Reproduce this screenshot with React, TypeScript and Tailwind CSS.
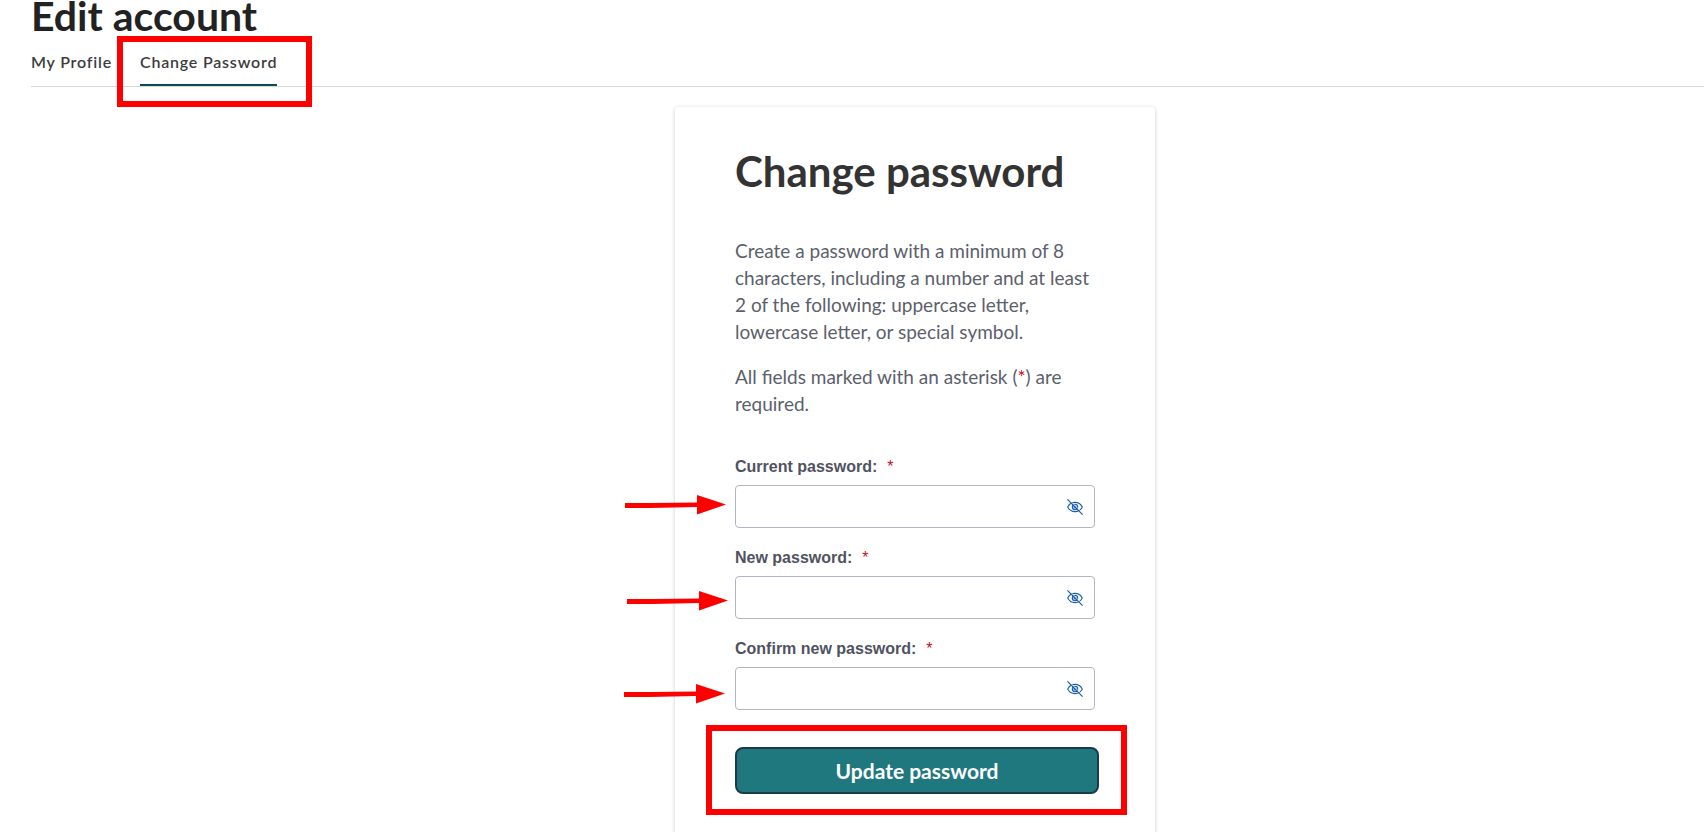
import React from 'react';

interface PasswordFieldProps {
  id: string;
  label: string;
  arrowClass: string;
}

const fields: PasswordFieldProps[] = [
  { id: 'current-password', label: 'Current password:', arrowClass: '-left-[110px] top-2.5' },
  { id: 'new-password', label: 'New password:', arrowClass: '-left-[108px] top-[15px]' },
  { id: 'confirm-password', label: 'Confirm new password:', arrowClass: '-left-[111px] top-[17px]' },
];

const EyeOffIcon: React.FC = () => (
  <svg className="w-4 h-4" viewBox="0 0 16 16" fill="none" stroke="currentColor" strokeWidth={1.1}>
    <path d="M0.7 8C2.2 5 5 3.4 8 3.4s5.800 1.600 7.300 4.600c-1.500 3-4.300 4.600-7.300 4.600S2.200 11 0.700 8z" />
    <circle cx="8" cy="8" r="2.7" fill="currentColor" fillOpacity={0.25} />
    <circle cx="8" cy="8" r="1" strokeWidth={0.8} />
    <path d="M1.600 0.200l14.400 14.400" stroke="white" strokeWidth={0.8} />
    <path d="M0.400 0.400l15.200 15.200" strokeWidth={1.200} />
  </svg>
);

const Arrow: React.FC<{ className: string }> = ({ className }) => (
  <svg
    className={`absolute w-[101px] h-5 text-[#ff0000] ${className}`}
    viewBox="0 0 101 20"
    fill="currentColor"
    aria-hidden="true"
  >
    <path d="M0 8h26l46-0.500V0l29 9.500L72 19.500V12l-46 1H0z" />
  </svg>
);

const PasswordField: React.FC<PasswordFieldProps> = ({ id, label, arrowClass }) => (
  <div>
    <label
      htmlFor={id}
      className="flex gap-2.5 mb-1.5 font-['Liberation_Sans',Arial,sans-serif] text-base font-bold text-[#50535f]"
    >
      {label}
      <span className="font-normal text-[#c10e21]">*</span>
    </label>
    <div className="relative">
      <input
        id={id}
        type="password"
        className="block w-full h-[43px] pl-3 pr-10 rounded-sm border border-[#b0b7c3] bg-white"
      />
      <button type="button" aria-label="Show password" className="absolute right-3 top-3.5 text-[#1b5faa]">
        <EyeOffIcon />
      </button>
      <Arrow className={arrowClass} />
    </div>
  </div>
);

export default function App() {
  return (
    <div className="h-screen overflow-hidden bg-white font-[Lato,sans-serif]">
      {/* Page header and tabs */}
      <header className="pl-[31px]">
        <h1 className="text-[41px] leading-8 font-bold text-[#222222]">Edit account</h1>
        <nav className="flex gap-7 pt-5 border-b border-[#d9d9d9] text-base leading-5 font-semibold tracking-wider text-[#3c3c3c]">
          <a href="#profile" className="pb-3.5">My Profile</a>
          <a href="#password" className="relative pb-3 border-b-2 border-[#0b4a5a]">
            Change Password
            <span className="absolute -left-[23px] -right-[35px] -top-4 -bottom-[23px] border-6 border-[#ff0000] pointer-events-none" />
          </a>
        </nav>
      </header>

      {/* Change password card */}
      <main className="flex justify-center pt-5 pl-[126px]">
        <form className="w-full max-w-[480px] px-[60px] pt-10 pb-[60px] rounded-sm bg-white shadow-[0_1px_4px_rgba(0,0,0,0.2)]">
          <h2 className="mb-[42px] text-[42px] leading-12 font-bold text-[#333333]">Change password</h2>
          <div className="flex flex-col gap-[18px] mb-[38px] text-[19px] leading-[27px] text-[#5c5f6c]">
            <p>
              Create a password with a minimum of 8 characters, including a number and at least 2 of the following:
              uppercase letter, lowercase letter, or special symbol.
            </p>
            <p>
              All fields marked with an asterisk (<span className="text-[#c10e21]">*</span>) are required.
            </p>
          </div>
          <div className="flex flex-col gap-[18px]">
            {fields.map((field) => (
              <PasswordField key={field.id} {...field} />
            ))}
          </div>
          <div className="relative mt-[37px] -mr-1">
            <button
              type="submit"
              className="block w-full h-[47px] rounded-lg border-2 border-[#1b3a4b] bg-[#20787f] text-[21px] font-bold text-white"
            >
              Update password
            </button>
            <span className="absolute -left-[29px] -right-7 -top-[22px] -bottom-[21px] border-6 border-[#ff0000] pointer-events-none" />
          </div>
        </form>
      </main>
    </div>
  );
}
